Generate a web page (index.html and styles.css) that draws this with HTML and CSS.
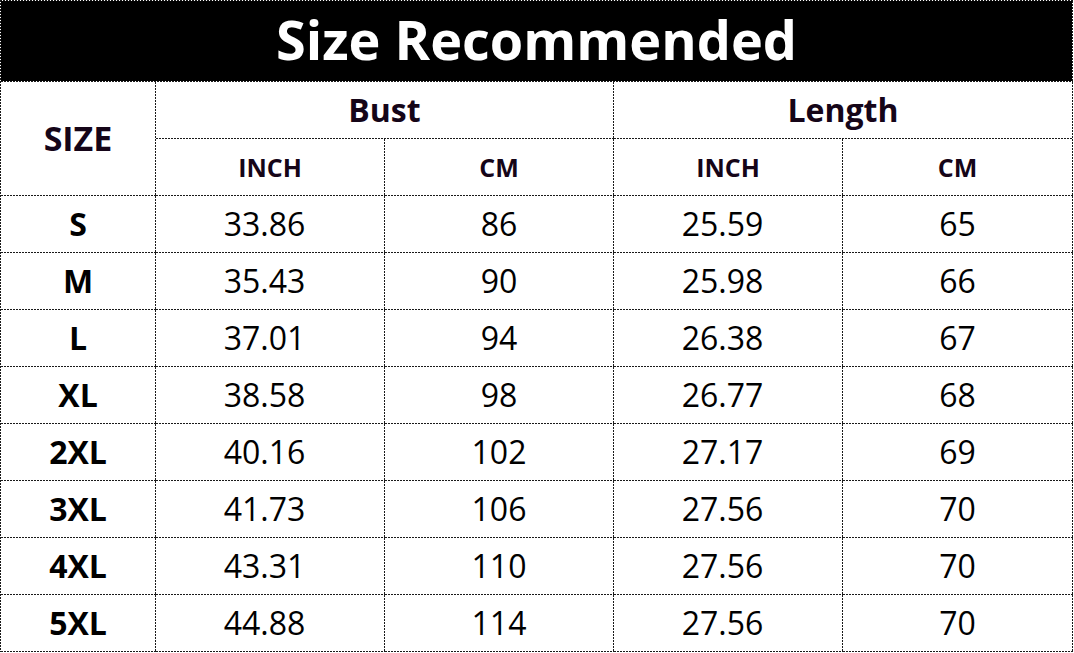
FILE: index.html
```html
<!DOCTYPE html>
<html lang="en">
<head>
<meta charset="utf-8">
<title>Size Recommended</title>
<link rel="stylesheet" href="styles.css">
</head>
<body>
<div class="chart">
  <div class="cell title">Size Recommended</div>
  <div class="cell size-head">SIZE</div>
  <div class="cell group">Bust</div>
  <div class="cell group">Length</div>
  <div class="cell unit">INCH</div>
  <div class="cell unit">CM</div>
  <div class="cell unit">INCH</div>
  <div class="cell unit">CM</div>

  <div class="cell label">S</div><div class="cell num dec">33.86</div><div class="cell num">86</div><div class="cell num dec">25.59</div><div class="cell num">65</div>
  <div class="cell label">M</div><div class="cell num dec">35.43</div><div class="cell num">90</div><div class="cell num dec">25.98</div><div class="cell num">66</div>
  <div class="cell label">L</div><div class="cell num dec">37.01</div><div class="cell num">94</div><div class="cell num dec">26.38</div><div class="cell num">67</div>
  <div class="cell label">XL</div><div class="cell num dec">38.58</div><div class="cell num">98</div><div class="cell num dec">26.77</div><div class="cell num">68</div>
  <div class="cell label">2XL</div><div class="cell num dec">40.16</div><div class="cell num">102</div><div class="cell num dec">27.17</div><div class="cell num">69</div>
  <div class="cell label">3XL</div><div class="cell num dec">41.73</div><div class="cell num">106</div><div class="cell num dec">27.56</div><div class="cell num">70</div>
  <div class="cell label">4XL</div><div class="cell num dec">43.31</div><div class="cell num">110</div><div class="cell num dec">27.56</div><div class="cell num">70</div>
  <div class="cell label">5XL</div><div class="cell num dec">44.88</div><div class="cell num">114</div><div class="cell num dec">27.56</div><div class="cell num">70</div>
</div>
</body>
</html>
```
FILE: styles.css
```css
html, body {
  margin: 0;
  padding: 0;
  background: #ffffff;
}

.chart {
  --line: #1a1a1a;
  --dash-v: repeating-linear-gradient(to bottom, var(--line) 0 2px, transparent 2px 3px);
  --dash-h: repeating-linear-gradient(to right, var(--line) 0 2px, transparent 2px 3px);
  display: grid;
  grid-template-columns: 155px 229px 229px 229px 230px;
  grid-template-rows: 81px repeat(10, 57px);
  width: 1073px;
  box-sizing: border-box;
  padding: 1px 0 0 1px;
  background-color: #fff;
  background-image: var(--dash-v), var(--dash-h);
  background-size: 1px 100%, 100% 1px;
  background-position: left top, left top;
  background-repeat: no-repeat;
  font-family: "Open Sans", "Noto Sans", sans-serif;
  color: #000;
}

.cell {
  box-sizing: border-box;
  padding: 0 1px 2px 0;
  display: flex;
  align-items: center;
  justify-content: center;
  white-space: nowrap;
  background-color: #fff;
  background-image: var(--dash-v), var(--dash-h);
  background-size: 1px 100%, 100% 1px;
  background-position: right top, left bottom;
  background-repeat: no-repeat;
}

.title {
  grid-column: 1 / 6;
  background-color: #000;
  background-image: var(--dash-v), var(--dash-h),
    linear-gradient(#fff, #fff), linear-gradient(#fff, #fff);
  background-size: 1px 100%, 100% 1px, 1px 100%, 100% 1px;
  background-position: right top, left bottom, right top, left bottom;
  background-repeat: no-repeat;
  color: #fff;
  font-weight: 700;
  font-size: 54px;
  padding-bottom: 6px;
}

.size-head {
  grid-row: 2 / 4;
  font-weight: 700;
  font-size: 34px;
  color: #150518;
}

.group {
  grid-column: span 2;
  font-weight: 700;
  font-size: 32px;
  color: #150518;
}

.unit {
  font-weight: 700;
  font-size: 25px;
  color: #150518;
}

.label {
  font-weight: 700;
  font-size: 32px;
}

.num {
  font-size: 32px;
}

.dec {
  padding-right: 12px;
}
```
